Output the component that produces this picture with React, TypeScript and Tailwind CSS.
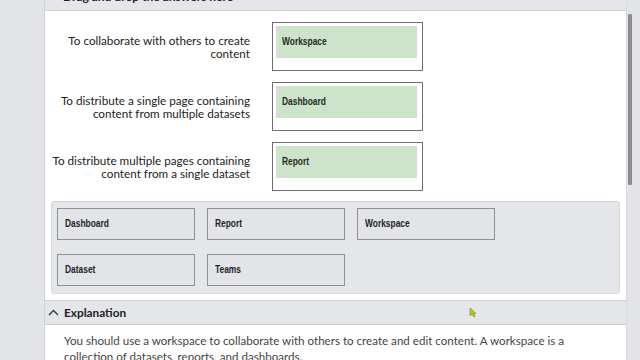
const targets = [
  { label: ['To collaborate with others to create', 'content'], answer: 'Workspace' },
  { label: ['To distribute a single page containing', 'content from multiple datasets'], answer: 'Dashboard' },
  { label: ['To distribute multiple pages containing', 'content from a single dataset'], answer: 'Report' },
];

const options = [
  ['Dashboard', 'Report', 'Workspace'],
  ['Dataset', 'Teams'],
];

const ui = "font-['Lato','Noto_Sans',sans-serif]";
const tag = "font-['Liberation_Sans','Arial',sans-serif]";

function Tag({ text }: { text: string }) {
  return (
    <span className={`${tag} inline-block origin-left scale-x-[0.8] text-[10.5px] font-bold whitespace-nowrap`}>
      {text}
    </span>
  );
}

export default function App() {
  return (
    <div className="relative w-[640px] h-[360px] overflow-hidden flex bg-[#e2e4e7]">
      {/* left gutter */}
      <div className="w-[44px] shrink-0" />

      {/* question panel */}
      <main className="w-[582px] shrink-0 bg-white border-l border-[#d0d3d7] flex flex-col">
        <div className="-mt-[20px] h-[31px] shrink-0 bg-[#e4e6e9] border-b border-[#cdd0d4] flex items-end pb-[7px] pl-[18px]">
          <span className={`${ui} text-[12px] leading-[12px] font-bold text-[#222]`}>Drag and drop the answers here</span>
        </div>

        <div className="pt-[11px] flex flex-col gap-[11px]">
          {targets.map((t) => (
            <div key={t.answer} className="flex items-center">
              <div className={`${ui} w-[205px] text-right text-[11.7px] leading-[13px] text-[#222] whitespace-nowrap`}>
                <p>{t.label[0]}</p>
                <p>{t.label[1]}</p>
              </div>
              <div className="ml-[22px] w-[151px] h-[49px] border border-[#6f6f6f] bg-white p-[3px] pr-[5px]">
                <div className="h-[32px] bg-[#cde4ca] flex items-center pl-[6px] text-[#1e2a1e]">
                  <Tag text={t.answer} />
                </div>
              </div>
            </div>
          ))}
        </div>

        {/* answer bank */}
        <div className="mt-[10px] ml-[6px] w-[569px] h-[93px] shrink-0 bg-[#e4e6ea] border border-[#d3d6da] rounded-[3px] pt-[6px] pl-[5px] flex flex-col gap-[14px]">
          {options.map((row, i) => (
            <div key={i} className="flex gap-[12px]">
              {row.map((o) => (
                <div key={o} className="w-[138px] h-[32px] border border-[#8d9095] bg-[#e2e4e8] flex items-center pl-[7px] text-[#1f2328]">
                  <Tag text={o} />
                </div>
              ))}
            </div>
          ))}
        </div>

        {/* explanation */}
        <div className="mt-[6px] h-[25px] shrink-0 bg-[#e4e6e9] border-t border-b border-[#cdd0d4] flex items-center pl-[3px] gap-[5px]">
          <svg width="11" height="7" viewBox="0 0 11 7" className="text-[#333]">
            <polyline points="1,6 5.5,1.5 10,6" fill="none" stroke="currentColor" strokeWidth="1.3" />
          </svg>
          <span className={`${ui} text-[11.8px] font-bold text-[#222]`}>Explanation</span>
        </div>
        <div className={`${ui} pt-[8px] pl-[19px] pr-[20px] text-[11.6px] leading-[16px] text-[#444]`}>
          You should use a workspace to collaborate with others to create and edit content. A workspace is a collection of datasets, reports, and dashboards.
        </div>
      </main>

      {/* scrollbar */}
      <div className="w-[14px] shrink-0 border-l border-[#d8dadd] pl-[1px] pt-[14px]">
        <div className="w-[4px] h-[171px] bg-[#8b8d91] rounded-[1px]" />
      </div>

      {/* mouse pointer */}
      <svg className="absolute left-[469px] top-[307px]" width="8" height="11" viewBox="0 0 8 11">
        <path d="M1 1 L1 9 L3 7 L5 10 L6 9.5 L4.5 6.5 L7 6.5 Z" fill="#b8c51a" stroke="#7a8410" strokeWidth="0.6" />
      </svg>
    </div>
  );
}
